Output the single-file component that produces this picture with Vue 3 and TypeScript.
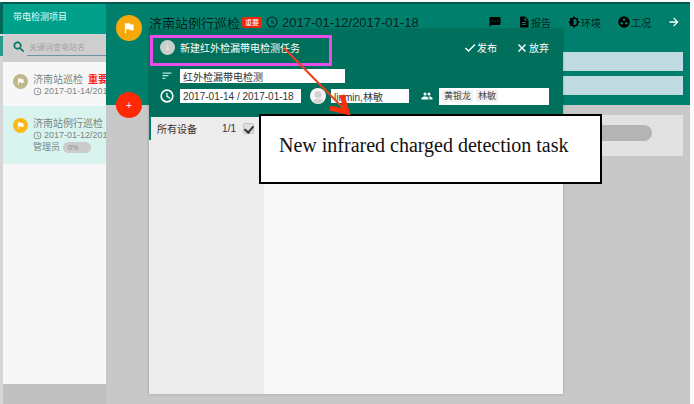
<script setup lang="ts">
import { ref } from 'vue'

interface Project {
  name: string
  urgent: boolean
  dates: string
  owner?: string
  progress?: string
  active: boolean
}

const projects: Project[] = [
  { name: '济南站巡检', urgent: true, dates: '2017-01-14/2017-01-18', active: false },
  { name: '济南站例行巡检', urgent: false, dates: '2017-01-12/2017-01-18', owner: '管理员', progress: '0%', active: true },
]

const keyword = ref('')
const taskName = ref('红外检漏带电检测')
const taskDates = ref('2017-01-14 / 2017-01-18')
const leader = ref('linmin,林敏')
const members = ref(['黄银龙', '林敏'])
const allChecked = ref(true)
</script>

<template>
  <div class="page">
    <div class="edge"></div>
    <aside class="sidebar">
      <h1 class="side-title">带电检测项目</h1>
      <label class="search">
        <svg class="search-icon" viewBox="0 0 24 24"><path d="M15.5 14h-.8l-.3-.3A6.5 6.5 0 1 0 13.700 14.400l.3.3v.8l5 5 1.500-1.500zm-6 0a4.500 4.500 0 1 1 0-9 4.500 4.500 0 0 1 0 9z" stroke="currentColor" /></svg>
        <input v-model="keyword" type="text" aria-label="搜索" placeholder="关键词变电站名" />
      </label>
      <ul class="projects">
        <li v-for="p in projects" :key="p.name" class="project" :class="{ active: p.active }">
          <span class="dot">
            <svg viewBox="0 0 24 24"><path d="M14.400 6 14 4H5v17h2v-7h5.600l.4 2h7V6z" /></svg>
          </span>
          <div class="project-body">
            <div class="project-name">{{ p.name }}<b v-if="p.urgent">重要</b></div>
            <div class="project-dates">
              <svg viewBox="0 0 24 24"><path d="M12 2a10 10 0 1 0 0 20 10 10 0 0 0 0-20zm0 18a8 8 0 1 1 0-16 8 8 0 0 1 0 16zm.5-13H11v6l5.200 3.100.8-1.200-4.500-2.700z" /></svg>
              {{ p.dates }}
            </div>
            <div v-if="p.owner" class="project-owner">{{ p.owner }}<span class="progress">{{ p.progress }}</span></div>
          </div>
        </li>
      </ul>
      <div class="side-foot"></div>
    </aside>

    <main class="main">
      <header class="hero">
        <div class="toolbar">
          <h2>济南站例行巡检</h2>
          <span class="badge">重要</span>
          <svg class="i12" viewBox="0 0 24 24"><path d="M12 1a11 11 0 1 0 0 22 11 11 0 0 0 0-22zm0 20a9 9 0 1 1 0-18 9 9 0 0 1 0 18zm.8-14H11v6l5.200 3.100.8-1.200-4.200-2.700z" /></svg>
          <time>2017-01-12/2017-01-18</time>
          <nav class="tools">
            <button type="button" aria-label="消息">
              <svg class="i12" viewBox="0 0 24 24"><path d="M21 2H3a2 2 0 0 0-2 2v18l4-4h16a2 2 0 0 0 2-2V4a2 2 0 0 0-2-2z" /><path class="cut" d="M6 9h2v2H6zm5 0h2v2h-2zm5 0h2v2h-2z" /></svg>
            </button>
            <button type="button">
              <svg class="i12" viewBox="0 0 24 24"><path d="M14 1H6a2 2 0 0 0-2 2v18c0 1.100.9 2 2 2h13a2 2 0 0 0 2-2V8zm2 17H8v-2h8zm0-4H8v-2h8zm-3-5V3l6 6z" /></svg>报告
            </button>
            <button type="button">
              <svg class="i12" viewBox="0 0 24 24"><path d="M20 15.300 23.300 12 20 8.700V4h-4.700L12 .7 8.700 4H4v4.700L.7 12 4 15.300V20h4.700l3.300 3.300 3.300-3.300H20z" /><path class="cut" d="M11 5.500a6.500 6.500 0 0 1 0 13z" /></svg>环境
            </button>
            <button type="button">
              <svg class="i12" viewBox="0 0 24 24"><circle cx="12" cy="12" r="11.500" /><circle class="cut" cx="12" cy="7.500" r="2.500" /><circle class="cut" cx="7.500" cy="14.500" r="2.500" /><circle class="cut" cx="16.500" cy="14.500" r="2.500" /></svg>工况
            </button>
            <button type="button" class="next" aria-label="下一步">
              <svg class="i12" viewBox="0 0 24 24"><path d="m12 3-1.700 1.700L16 10.700H3v2.600h13l-5.700 6L12 21l9-9z" /></svg>
            </button>
          </nav>
        </div>
        <div class="bars">
          <div class="bar"></div>
          <div class="bar"></div>
        </div>
      </header>
      <section class="card"><div class="pill"></div></section>

      <span class="fab fab-flag">
        <svg viewBox="0 0 24 24"><path d="M14.400 6 14 4H5v17h2v-7h5.600l.4 2h7V6z" /></svg>
      </span>
      <button type="button" class="fab fab-add" aria-label="添加">+</button>

      <section class="dialog" role="dialog" aria-labelledby="task-title">
        <div class="dialog-head">
          <div class="dialog-title">
            <span class="step">1</span>
            <h3 id="task-title">新建红外检漏带电检测任务</h3>
            <button type="button" class="publish">
              <svg class="i12" viewBox="0 0 24 24"><path d="M9 16.200 3.800 11l-1.900 1.900L9 20 23 6l-1.900-1.900z" /></svg>发布
            </button>
            <button type="button">
              <svg class="i12" viewBox="0 0 24 24"><path d="M20 6 18 4l-6 6-6-6-2 2 6 6-6 6 2 2 6-6 6 6 2-2-6-6z" /></svg>放弃
            </button>
          </div>
          <div class="row">
            <label class="lead" for="task-name">
              <svg class="i12 sort" viewBox="0 0 24 24"><path d="M3 18h6v-2.500H3zM3 5v2.500h18V5zm0 7.700h12v-2.500H3z" /></svg>
            </label>
            <input id="task-name" v-model="taskName" class="name" type="text" />
          </div>
          <div class="row">
            <label class="lead" for="task-dates">
              <svg class="i16" viewBox="0 0 24 24"><path d="M12 2a10 10 0 1 0 0 20 10 10 0 0 0 0-20zm0 17.500a7.500 7.500 0 1 1 0-15 7.500 7.500 0 0 1 0 15zm.8-12.500H11v6l5.200 3.100.9-1.500-4.300-2.500z" /></svg>
            </label>
            <input id="task-dates" v-model="taskDates" class="dates" type="text" />
            <label class="avatar" for="task-leader">
              <svg viewBox="0 0 16 16"><circle cx="8" cy="8" r="8" fill="#f5f5f5" /><circle cx="8" cy="6.500" r="3.500" fill="#d2d2d2" /><path d="M3 13c1-3 9-3 10 0-2 3-8 3-10 0z" fill="#d2d2d2" /></svg>
            </label>
            <input id="task-leader" v-model="leader" class="leader" type="text" />
            <svg class="i12 group" viewBox="0 0 24 24"><path d="M16 11a3 3 0 1 0 0-6 3 3 0 0 0 0 6zm-8 0a3 3 0 1 0 0-6 3 3 0 0 0 0 6zm0 2c-2.300 0-7 1.200-7 3.500V19h14v-2.500C15 14.200 10.300 13 8 13zm8 0-1 .1c1.200.8 2 2 2 3.400V19h6v-2.500c0-2.300-4.700-3.500-7-3.500z" /></svg>
            <div class="members">
              <span v-for="m in members" :key="m">{{ m }}</span>
            </div>
          </div>
        </div>
        <div class="dialog-body">
          <div class="devices">
            <label class="device-row">
              <span>所有设备</span>
              <span class="count">1/1</span>
              <input v-model="allChecked" type="checkbox" />
            </label>
          </div>
          <div class="detail"></div>
        </div>
      </section>
    </main>

    <div class="highlight"></div>
    <div class="callout">New infrared charged detection task</div>
    <svg class="arrow" viewBox="0 0 72 74"><path d="M2 2 64 65" stroke="#e8431c" stroke-width="2" fill="none" /><path d="M60 49 65 66 48 62" stroke="#ff2d0a" stroke-width="5" fill="none" stroke-linejoin="miter" /></svg>
  </div>
</template>

<style>
body {
  margin: 0;
  background: #fafafa;
}
</style>

<style scoped>
* {
  box-sizing: border-box;
}
.page {
  position: relative;
  display: flex;
  min-height: 100vh;
  padding: 2px 4px 0 0;
  overflow: hidden;
  font-family: "Liberation Sans", "Noto Sans CJK SC", sans-serif;
  font-size: 10px;
  color: #333;
}
h1, h2, h3, ul {
  margin: 0;
  padding: 0;
  font-weight: 400;
}
button {
  display: flex;
  align-items: center;
  gap: 1px;
  padding: 0;
  border: 0;
  background: none;
  font: inherit;
  color: inherit;
  white-space: nowrap;
}
input {
  min-width: 0;
  margin: 0;
  border: 0;
  font: inherit;
  color: inherit;
}
svg {
  display: block;
  flex: none;
  fill: currentColor;
}
.i12 {
  width: 12px;
  height: 12px;
}
.i16 {
  width: 16px;
  height: 16px;
}
.edge {
  flex: none;
  width: 3px;
  background: linear-gradient(#00695a 0 32px, #d8e0df 32px 34px, #2a9a8c 34px 54px, #d6d6d6 54px);
}
.sidebar {
  display: flex;
  flex: none;
  flex-direction: column;
  width: 103px;
  overflow: hidden;
  border-top: 2px solid #00594c;
  background: #f7f7f7;
}
.side-title {
  height: 30px;
  padding-left: 10px;
  background: #00a08b;
  color: #e6fffa;
  font-size: 9px;
  line-height: 26px;
}
.search {
  display: flex;
  gap: 1px;
  height: 28px;
  padding: 6px 0 6px 9px;
  background: #cecece;
}
.search-icon {
  width: 14px;
  height: 14px;
  color: #087860;
}
.search input {
  flex: 1;
  border-bottom: 1px solid #6c93a8;
  background: none;
  font-size: 8px;
}
.search input::placeholder {
  color: #a3a3a3;
}
.projects {
  flex: 1;
  list-style: none;
}
.project {
  display: flex;
  gap: 5px;
  padding: 12px 0 10px 10px;
  color: #7a8583;
  white-space: nowrap;
}
.project.active {
  background: #d9f3ee;
}
.dot {
  display: flex;
  flex: none;
  align-items: center;
  justify-content: center;
  width: 15px;
  height: 15px;
  border-radius: 50%;
  background: #c0b88a;
  color: #fff;
}
.active .dot {
  background: #fbb911;
}
.dot svg {
  width: 9px;
  height: 9px;
}
.project-name {
  line-height: 12px;
}
.project-name b {
  margin-left: 5px;
  color: #f22;
}
.project-dates {
  display: flex;
  align-items: center;
  gap: 2px;
  font-size: 9px;
  line-height: 10px;
}
.project-dates svg {
  width: 9px;
  height: 9px;
}
.project-owner {
  display: flex;
  align-items: center;
  gap: 3px;
  font-size: 9px;
  line-height: 14px;
}
.progress {
  width: 28px;
  height: 11px;
  padding-left: 5px;
  border-radius: 6px;
  background: #c9cccb;
  color: #8a8a8a;
  font-size: 7px;
  line-height: 11px;
}
.side-foot {
  height: 20px;
  background: #c0c0c0;
}
.main {
  position: relative;
  flex: 1;
  min-width: 0;
  border-top: 2px solid #00594c;
  background: #c8c8c8;
}
.hero {
  height: 101px;
  padding: 0 7px 0 43px;
  background: #00806c;
  color: #05201c;
}
.toolbar {
  display: flex;
  align-items: center;
  gap: 2px;
  height: 36px;
  padding-right: 3px;
  white-space: nowrap;
}
.toolbar h2,
.toolbar time {
  font-size: 13px;
}
.badge {
  padding: 0 3px;
  border-radius: 2px;
  background: #f0280c;
  color: #fff;
  font-size: 7px;
  line-height: 11px;
}
.toolbar > .i12 {
  margin: 0 2px;
}
.tools {
  display: flex;
  gap: 17px;
  margin-left: auto;
}
.tools svg {
  color: #000;
}
.tools .cut {
  fill: #00806c;
}
.tools .next svg {
  color: #fff;
}
.bars {
  display: grid;
  gap: 5px;
  padding-top: 12px;
}
.bar {
  height: 19px;
  background: #c0dbe2;
}
.card {
  margin: 10px 7px 0 43px;
  padding: 10px 31px 15px;
  background: #e2e2e2;
}
.pill {
  height: 16px;
  border-radius: 8px;
  background: #b4b4b4;
}
.fab {
  position: absolute;
  left: 10px;
  display: flex;
  align-items: center;
  justify-content: center;
  width: 26px;
  height: 26px;
  border-radius: 50%;
  color: #fff;
}
.fab svg {
  width: 14px;
  height: 14px;
}
.fab-flag {
  top: 11px;
  background: #f7a90a;
}
.fab-add {
  top: 88px;
  background: #ff2a04;
}
.dialog {
  position: absolute;
  inset: 25px 127px 10px 43px;
  display: flex;
  flex-direction: column;
  box-shadow: 0 0 3px rgba(0, 0, 0, 0.2);
}
.dialog-head {
  display: grid;
  gap: 6px;
  padding: 0 14px 14px 11px;
  background: #00705c;
  color: #fff;
}
.dialog-title {
  display: flex;
  align-items: center;
  height: 34px;
  padding-top: 3px;
  gap: 5px;
}
.dialog-title h3 {
  font-size: 10px;
  white-space: nowrap;
}
.dialog-title .publish {
  margin: 0 14px 0 auto;
}
.step {
  width: 15px;
  height: 15px;
  border-radius: 50%;
  background: #c9cfcc;
  color: #f4efc8;
  font-size: 8px;
  line-height: 15px;
  text-align: center;
}
.sort {
  color: #a5ecdc;
}
.row {
  display: flex;
  align-items: center;
  height: 14px;
}
.lead {
  display: flex;
  flex: none;
  justify-content: center;
  width: 14px;
  margin-right: 6px;
}
.row input {
  height: 14px;
  padding: 0 3px;
  background: #fff;
  color: #333;
}
.row .name {
  width: 165px;
}
.row .dates {
  width: 121px;
}
.avatar {
  flex: none;
  width: 16px;
  margin: 0 5px 0 9px;
}
.row .leader {
  width: 78px;
}
.group {
  margin: 0 6px 0 12px;
}
.members {
  display: flex;
  flex: 1;
  align-items: center;
  gap: 3px;
  height: 17px;
  padding: 0 3px;
  background: #fff;
  color: #444;
  font-size: 9px;
}
.members span {
  padding: 0 2px;
  background: #f2f2f2;
  line-height: 12px;
  white-space: nowrap;
}
.dialog-body {
  display: flex;
  flex: 1;
}
.devices {
  width: 115px;
  background: #ececec;
}
.device-row {
  display: flex;
  align-items: center;
  height: 23px;
  padding: 0 10px 0 6px;
  border-left: 2px solid #00806c;
}
.count {
  margin: 0 7px 0 auto;
}
.device-row input {
  display: flex;
  align-items: flex-start;
  justify-content: center;
  width: 11px;
  height: 11px;
  appearance: none;
  border: 1px solid #c2c2c2;
  border-radius: 2px;
  background: #e0e0e0;
}
.device-row input:checked::before {
  content: "";
  width: 4px;
  height: 7px;
  border: solid #333;
  border-width: 0 2px 2px 0;
  transform: rotate(40deg);
}
.detail {
  flex: 1;
  background: #f8f8f8;
}
.highlight {
  position: absolute;
  top: 35px;
  left: 150px;
  width: 182px;
  height: 31px;
  border: 3px solid #e84cea;
}
.callout {
  position: absolute;
  top: 114px;
  left: 259px;
  width: 343px;
  height: 70px;
  padding: 17px 18px;
  border: 2px solid #000;
  background: #fff;
  color: #111;
  font-family: "Liberation Serif", serif;
  font-size: 20px;
  line-height: 24px;
  white-space: nowrap;
}
.arrow {
  position: absolute;
  top: 46px;
  left: 282px;
  width: 72px;
  height: 74px;
}
</style>
